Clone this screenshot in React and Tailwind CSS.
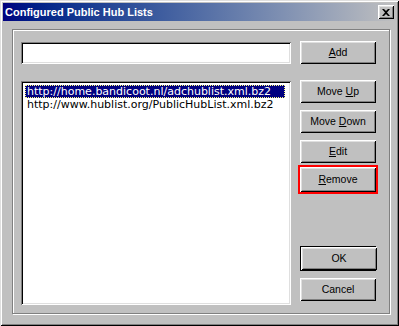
const raised =
  'shadow-[inset_1px_1px_0_#fff,inset_-1px_-1px_0_#000,inset_2px_2px_0_#dfdfdf,inset_-2px_-2px_0_#808080]'
const sunken =
  'shadow-[inset_1px_1px_0_#808080,inset_-1px_-1px_0_#fff,inset_2px_2px_0_#000,inset_-2px_-2px_0_#dfdfdf]'

function Button({ children, className = '' }) {
  return (
    <button
      type="button"
      className={`flex h-[23px] w-[76px] items-center justify-center bg-[#c0c0c0] text-[10.5px] leading-none text-black ${raised} ${className}`}
    >
      <span className="whitespace-pre">{children}</span>
    </button>
  )
}

export default function App() {
  const urls = ['http://home.bandicoot.nl/adchublist.xml.bz2', 'http://www.hublist.org/PublicHubList.xml.bz2']

  return (
    <div className="font-['Liberation_Sans',Arial,sans-serif]">
      <div className="flex h-[326px] w-[399px] flex-col bg-[#c0c0c0] p-[3px] shadow-[inset_1px_1px_0_#dfdfdf,inset_-1px_-1px_0_#000,inset_2px_2px_0_#fff,inset_-2px_-2px_0_#808080]">
        <div className="flex h-[18px] items-center justify-between bg-linear-to-r from-[#000080] to-[#c0c0c0] pl-[2px] pr-[2px]">
          <span className="text-[11px] font-bold leading-none text-white">Configured Public Hub Lists</span>
          <button type="button" className={`flex h-[14px] w-[16px] items-center justify-center bg-[#c0c0c0] ${raised}`}>
            <svg width="8" height="7" viewBox="0 0 8 7" className="mr-[1px]">
              <path d="M0 0h2l2 2 2-2h2L5 3.5 8 7H6L4 5 2 7H0l3-3.5z" fill="#000" />
            </svg>
          </button>
        </div>

        <div className="pl-[9px] pt-[8px]">
          <div className="flex h-[285px] w-[378px] border border-[#808080] pl-[8px] pt-[11px] shadow-[inset_1px_1px_0_#fff,1px_1px_0_#fff]">
            <div className="flex w-[270px] flex-col">
              <div className={`mt-[1px] h-[22px] bg-white ${sunken}`} />
              <div className={`mt-[17px] h-[224px] bg-white pb-[2px] pl-[4px] pr-[6px] pt-[4px] ${sunken}`}>
                {urls.map((url, i) => (
                  <div
                    key={url}
                    className={`flex h-[13px] items-center pl-[1px] font-['DejaVu_Sans',sans-serif] text-[11px] leading-none ${
                      i === 0
                        ? 'border border-dotted border-[#ffff7f] bg-[#000080] text-white'
                        : 'border border-transparent text-black'
                    }`}
                  >
                    {url}
                  </div>
                ))}
              </div>
            </div>

            <div className="ml-[9px] flex w-[76px] flex-col">
              <Button>
                <u>A</u>dd
              </Button>
              <Button className="mt-[16px]">
                Move <u>U</u>p
              </Button>
              <Button className="mt-[7px]">
                Move <u>D</u>own
              </Button>
              <Button className="mt-[7px]">
                <u>E</u>dit
              </Button>
              <div className="-mx-[2px] mt-[2px] border-2 border-[#ff0000]">
                <Button className="h-[25px]">
                  <u>R</u>emove
                </Button>
              </div>
              <div className="mt-[52px] border border-black">
                <Button className="h-[21px] w-[74px]">OK</Button>
              </div>
              <Button className="mt-[7px]">Cancel</Button>
            </div>
          </div>
        </div>
      </div>
    </div>
  )
}
